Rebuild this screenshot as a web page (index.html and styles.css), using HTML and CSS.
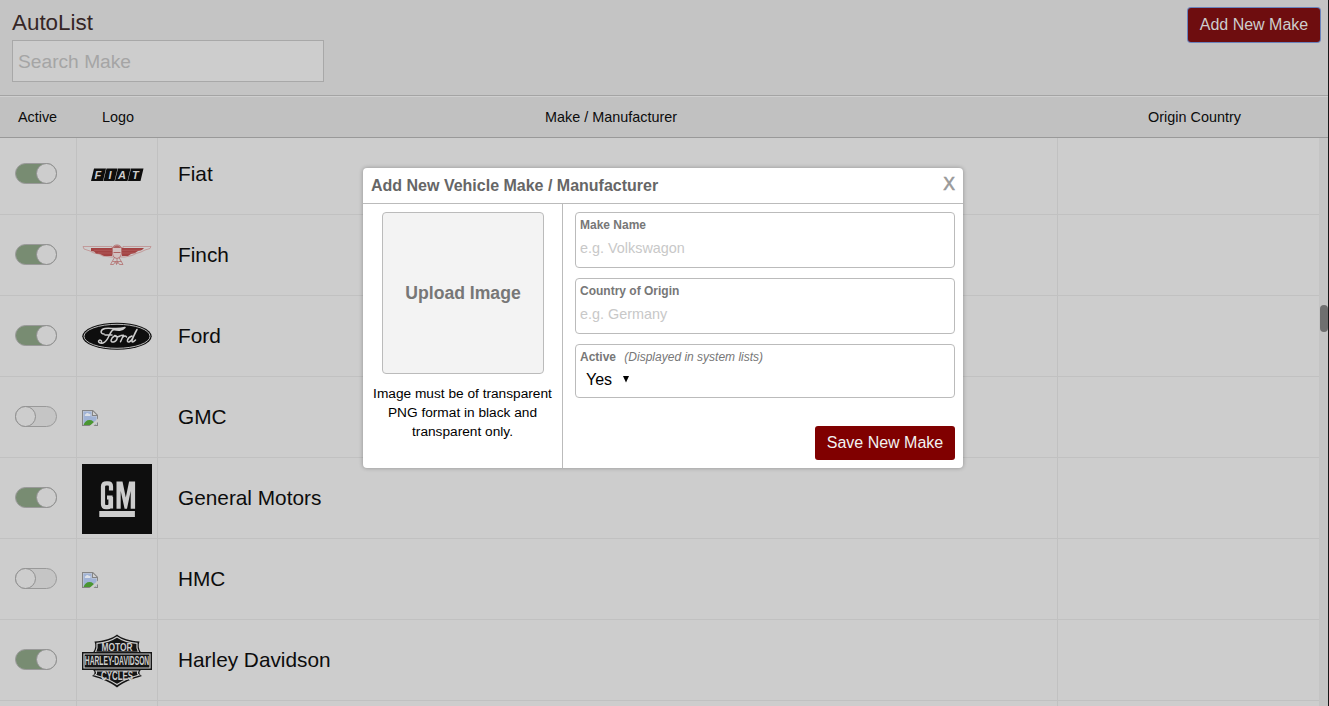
FILE: index.html
```html
<!DOCTYPE html>
<html lang="en">
<head>
<meta charset="utf-8">
<title>AutoList</title>
<link rel="stylesheet" href="styles.css">
</head>
<body>
<svg class="defs" width="0" height="0" aria-hidden="true">
  <symbol id="broken" viewBox="0 0 16 16">
    <path d="M0 0h11l5 5v11H0z" fill="#858585"/>
    <path d="M1 1h9v5h5v9H1z" fill="#c9cdd6"/>
    <path d="M1.500 1.500h8V6.500h5v8h-13z" fill="#a0b3d6"/>
    <path d="M3 6a1.300 1.300 0 0 1 .8-2A1.800 1.800 0 0 1 7 4a1.100 1.100 0 0 1 1 2z" fill="#dde1e8"/>
    <path d="M1.500 15c1-3 3-5 6-5s5 2 6 5z" fill="#4a9632"/>
    <path d="M11 1.500V5h3.500z" fill="#d4d4d4"/>
    <path d="M16 8.500V12l-4.500 4H7.500L12 12z" fill="#cdcdcd"/>
  </symbol>
</svg>
<div class="app">
  <header class="top">
    <div class="search-block">
      <h1 class="title">AutoList</h1>
      <input class="search" type="text" placeholder="Search Make">
    </div>
    <button class="btn btn-add">Add New Make</button>
  </header>
  <div class="columns">
    <span>Active</span><span>Logo</span><span>Make / Manufacturer</span><span>Origin Country</span>
  </div>
  <div class="body">
    <div class="list">
      <div class="row"><div class="cell"><i class="toggle on"></i></div>
        <div class="cell"><svg class="logo logo-low" viewBox="0 0 70 70">
          <g fill="#0e0e0e"><path d="M12 28.500h12l-3 12.500H9zM24.500 28.500h11l-3 12.500H21.500zM36 28.500h12.500l-3 12.500H33zM49 28.500h12.500l-3 12.500H46z"/></g>
          <g class="fiat"><text x="12.500" y="38.800">F</text><text x="26.500" y="38.800">I</text><text x="36" y="38.800">A</text><text x="50" y="38.800">T</text></g>
        </svg></div><div class="cell name">Fiat</div><div class="cell"></div></div>
      <div class="row"><div class="cell"><i class="toggle on"></i></div>
        <div class="cell"><svg class="logo" viewBox="0 0 70 70">
          <g fill="none" stroke="#bd8585" stroke-width=".7"><path d="M1 26.500h29v1.500h11v-1.500h28l-1 2-5 1.500-4 2-5 1.500-4 2-7 1.500H29l-8-1-4-2-5-1-4-2-6-2z"/></g>
          <path d="M9 28h21v8h-8l-4-2-4-.5-2-2-3-.5zM40 28h22l-2 2-4 1-3 2-4 1-3 2h-6z" fill="#a34343"/>
          <path d="M12 30.300h47M16 33h38" stroke="#b96c6c" stroke-width=".5"/>
          <path d="M30.500 28c1-4 8-4 9 0v5c0 3-2 5-4.500 5.500-3-.5-4.500-2.500-4.500-5.500z" fill="#d2c1c1" stroke="#ad6262" stroke-width=".8"/>
          <path d="M31 28c1-3.500 7-3.500 8 0zM31.500 32h7v1h-7z" fill="#ad6262"/>
          <path d="M32.500 37.500l-4 7h3l2-3 1 3 1-3 2 3h3.500l-4-7m-6.500 4h9M35 39v5" fill="none" stroke="#b36e6e" stroke-width=".8"/>
        </svg></div><div class="cell name">Finch</div><div class="cell"></div></div>
      <div class="row"><div class="cell"><i class="toggle on"></i></div>
        <div class="cell"><svg class="logo" viewBox="0 0 70 70">
          <ellipse cx="35" cy="35.300" rx="34.700" ry="13.500" fill="#0e0e0e"/><ellipse cx="35" cy="35.300" rx="33" ry="12" fill="none" stroke="#cdcdcd" stroke-width=".9"/>
          <g fill="none" stroke="#cdcdcd" stroke-width="1.500" stroke-linecap="round" stroke-linejoin="round">
            <path d="M22 33c-4 0-4-4.500 1-5.500 6-1 11 1.500 20-1-3 3.500-7 3-12 2M31 29c-4 2-4 11-10 13-3 1-5.500-1-4-2.500 1-1 3 0 2.500 1.500M23 34h7"/>
            <path d="M33 34.500c-5 3-5 7-1.500 6.500 4-1 5-6 1.500-6.500 1 1.500 3 1.500 5 .5M39 34.500l2.500-.3-3 6.500M40.500 36.500c2-2 3.500-2 4-.5"/>
            <path d="M50 35c-5.500 2-5.500 6.500-3 6C51 39.500 51 35 55 28.500 53 33 48.500 40.500 50.500 41c1 0 2-1 3-2"/>
          </g>
        </svg></div><div class="cell name">Ford</div><div class="cell"></div></div>
      <div class="row"><div class="cell"><i class="toggle"></i></div>
        <div class="cell"><svg class="broken"><use href="#broken"/></svg></div><div class="cell name">GMC</div><div class="cell"></div></div>
      <div class="row"><div class="cell"><i class="toggle on"></i></div>
        <div class="cell"><svg class="logo logo-low" viewBox="0 0 70 70">
          <path d="M0 0h70v70H0z" fill="#0e0e0e"/>
          <path d="M17.300 47h35.600v6H17.300z" fill="#cdcdcd"/>
          <path d="M29 26.500v-4q0-3.200-3-3.200h-1.500q-3.500 0-3.500 3.200v17.500q0 3.200 3 3.200h1.500q3 0 3-3.200V33.500H25M29 33v11.500" fill="none" stroke="#cdcdcd" stroke-width="4.200"/>
          <path d="M34.500 44.700V17.500h6l3.300 16 3.300-16h6v27.200h-4.400V27l-3.700 17.700h-2.400L38.700 27v17.700z" fill="#cdcdcd"/>
        </svg></div><div class="cell name">General Motors</div><div class="cell"></div></div>
      <div class="row"><div class="cell"><i class="toggle"></i></div>
        <div class="cell"><svg class="broken"><use href="#broken"/></svg></div><div class="cell name">HMC</div><div class="cell"></div></div>
      <div class="row"><div class="cell"><i class="toggle on"></i></div>
        <div class="cell"><svg class="logo logo-low" viewBox="0 0 70 70">
          <path d="M35 8.500c5 4 13 6.500 22.500 7-1.500 4-1 7 1.500 11v17.500c-3 2-1 5 1 6-10 3-18 6-25 11.500C28 56 20 53 10 50c2-1 4-4 1-6V26.500c2.500-4 3-7 1.500-11 9.500-.5 17.500-3 22.500-7z" fill="#151515"/>
          <path d="M35 11c6 4 12 5.800 20 6.300-.6 4 0 6 1.500 9h-43c1.500-3 2.100-5 1.500-9 8-.5 14-2.300 20-6.300zM14 45h42c-1 2-1 3 1 4-9 2.500-16 5.500-22 9.500-6-4-13-7-22-9.500 2-1 2-2 1-4z" fill="none" stroke="#cdcdcd" stroke-width="1.200"/>
          <path d="M0 26h70v18H0z" fill="#151515"/><path d="M2 28h66v14H2z" fill="none" stroke="#cdcdcd" stroke-width="1.200"/>
          <g class="harley"><text transform="translate(35 25.300) scale(.84 1)" font-size="10">MOTOR</text>
          <text transform="translate(35 39.300) scale(.56 1)" font-size="12">HARLEY-DAVIDSON</text>
          <text transform="translate(35 53.500) scale(.66 1)" font-size="12">CYCLES</text></g>
        </svg></div><div class="cell name">Harley Davidson</div><div class="cell"></div></div>
      <div class="row"><div class="cell"></div><div class="cell"></div><div class="cell"></div><div class="cell"></div></div>
    </div>
    <div class="scrollbar"><div class="thumb"></div></div>
  </div>
</div>
<section class="modal">
  <header class="modal-head"><h2>Add New Vehicle Make / Manufacturer</h2><span class="close">X</span></header>
  <div class="modal-body">
    <div class="upload-col">
      <div class="upload">Upload Image</div>
      <p class="hint">Image must be of transparent PNG format in black and transparent only.</p>
    </div>
    <div class="form">
      <label class="field"><span class="label">Make Name</span><input type="text" placeholder="e.g. Volkswagon"></label>
      <label class="field"><span class="label">Country of Origin</span><input type="text" placeholder="e.g. Germany"></label>
      <div class="field field-active"><span class="label">Active <em>(Displayed in system lists)</em></span>
        <span class="select">Yes <svg width="6" height="7" viewBox="0 0 6 7"><path d="M0 0h6L3 6.500z"/></svg></span></div>
      <button class="btn btn-save">Save New Make</button>
    </div>
  </div>
</section>
</body>
</html>
```
FILE: styles.css
```css
*, *::before { box-sizing: border-box; }
body {
  margin: 0;
  height: 706px;
  overflow: hidden;
  background: #cdcdcd;
  font-family: "Liberation Sans", Arial, sans-serif;
  color: #0c0c0c;
}
.defs { position: absolute; }
.app {
  height: 706px;
  display: flex;
  flex-direction: column;
  border-right: 1px solid #161616;
}
.top {
  height: 97px;
  flex: none;
  display: flex;
  justify-content: space-between;
  align-items: flex-start;
  padding: 8px 8px 0 12px;
  background: #c4c4c4;
  border-bottom: 1px solid #cfcfcf;
  box-shadow: inset 0 -1px #a4a4a4;
}
.title {
  margin: 0;
  height: 32px;
  font-size: 22.4px;
  line-height: 30px;
  font-weight: 400;
  color: #352626;
}
.search {
  display: block;
  width: 312px;
  height: 42px;
  padding: 2px 5px 0;
  border: 1px solid #a8a8a8;
  background: #cdcdcd;
  font: 19.2px "Liberation Sans", Arial, sans-serif;
}
.search::placeholder { color: #a5a5a5; }
.btn {
  height: 34px;
  padding: 0;
  border: 0;
  border-radius: 3px;
  font: 16px/32px "Liberation Sans", Arial, sans-serif;
  text-align: center;
}
.btn-add {
  width: 132px;
  background: #6e0d0f;
  color: #cdcdcd;
  box-shadow: 0 0 0 1px #6a83bd;
}
.columns {
  flex: none;
  height: 41px;
  display: grid;
  grid-template-columns: 75px 86px 900px 1fr;
  background: #c1c1c1;
  border-bottom: 1px solid #999;
  font-size: 14.4px;
  line-height: 40px;
  text-align: center;
}
.body {
  flex: 1;
  min-height: 0;
  display: flex;
  overflow: hidden;
}
.list { flex: 1; margin-top: -4px; }
.row {
  height: 81px;
  display: grid;
  grid-template-columns: 77px 81px 900px 1fr;
  border-bottom: 1px solid #c1c1c1;
}
.cell {
  display: flex;
  align-items: center;
  border-right: 1px solid #c1c1c1;
}
.cell:nth-child(1) { padding-left: 15px; }
.cell:nth-child(2) { padding-left: 5px; }
.cell:last-child { border-right: 0; }
.name { padding-left: 20px; font-size: 20.8px; }
.toggle {
  display: flex;
  width: 42px;
  height: 21px;
  margin-bottom: 2px;
  border: 1px solid #999;
  border-radius: 11px;
  background: #c5c5c5;
}
.toggle::before {
  content: "";
  flex: none;
  width: 21px;
  height: 21px;
  margin: -1px;
  border: 1px solid #909090;
  border-radius: 50%;
  background: #cdcdcd;
}
.toggle.on { justify-content: flex-end; background: #788c72; }
.logo { width: 70px; height: 70px; }
.logo-low { margin-top: 1px; }
.broken { width: 16px; height: 16px; margin-top: 2px; }
.fiat text { font: italic bold 11px "Liberation Sans", Arial, sans-serif; fill: #cdcdcd; }
.harley { font-family: "Liberation Sans", Arial, sans-serif; font-weight: bold; fill: #cdcdcd; text-anchor: middle; }
.scrollbar { width: 9px; padding-top: 167px; background: #c4c4c4; }
.thumb { width: 8px; height: 27px; margin-left: 1px; border-radius: 4px; background: #6f6f6f; }

.modal {
  position: absolute;
  left: 363px;
  top: 168px;
  width: 600px;
  height: 300px;
  display: flex;
  flex-direction: column;
  background: #fff;
  border-radius: 4px;
  box-shadow: 0 0 4px rgba(0, 0, 0, .3);
}
.modal-head {
  height: 36px;
  flex: none;
  display: flex;
  justify-content: space-between;
  padding: 0 8px;
  border-bottom: 1px solid #bbb;
}
.modal-head h2 { margin: 0; font-size: 16px; line-height: 35px; color: #666; }
.close { font-size: 17.6px; line-height: 32px; color: #999; -webkit-text-stroke: .6px #999; }
.modal-body { flex: 1; display: flex; }
.upload-col { width: 200px; padding: 8px 8px 0; border-right: 1px solid #bbb; }
.upload {
  width: 162px;
  height: 162px;
  margin-left: 11px;
  border: 1px solid #bbb;
  border-radius: 4px;
  background: #f3f3f3;
  color: #777;
  font-size: 17.6px;
  font-weight: 700;
  line-height: 160px;
  text-align: center;
}
.hint { margin: 10px 0 0; font-size: 13.7px; line-height: 19px; text-align: center; color: #000; }
.form {
  flex: 1;
  display: flex;
  flex-direction: column;
  gap: 10px;
  padding: 8px 8px 8px 12px;
}
.field {
  display: block;
  height: 56px;
  padding: 5px 4px 0;
  border: 1px solid #bbb;
  border-radius: 4px;
}
.field-active { height: 54px; }
.label { display: block; font-size: 12px; line-height: 14px; font-weight: 700; color: #777; }
.label em { font-weight: 400; margin-left: 5px; }
.field input {
  display: block;
  width: 100%;
  height: 24px;
  margin-top: 4px;
  padding: 0;
  border: 0;
  outline: 0;
  background: transparent;
  font: 14.4px "Liberation Sans", Arial, sans-serif;
}
.field input::placeholder { color: #c8c8c8; }
.select { display: flex; align-items: center; gap: 11px; padding-left: 6px; font-size: 16px; line-height: 18px; margin-top: 7px; color: #000; }
.select svg { margin-bottom: 1px; }
.btn-save { width: 140px; margin: auto 0 0 auto; background: #800000; color: #f2f2f2; }
```
